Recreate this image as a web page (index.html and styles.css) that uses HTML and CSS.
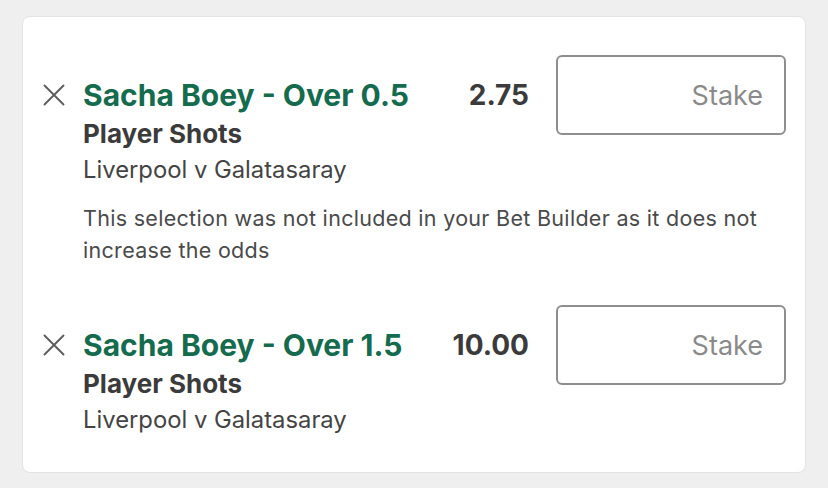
FILE: index.html
```html
<!DOCTYPE html>
<html lang="en">
<head>
<meta charset="utf-8">
<title>Bet slip</title>
<link rel="stylesheet" href="styles.css">
</head>
<body>
<div class="card">
  <div class="bet">
    <div class="bet-main">
      <svg class="close" viewBox="0 0 22 22" width="22" height="22"><path d="M1.5 1.5 L20.5 20.5 M20.5 1.5 L1.5 20.5" stroke="#5c5c5c" stroke-width="1.9" fill="none" stroke-linecap="round"/></svg>
      <div class="info">
        <div class="title">Sacha Boey - Over 0.5</div>
        <div class="market">Player Shots</div>
        <div class="event">Liverpool v Galatasaray</div>
      </div>
      <div class="odds">2.75</div>
      <div class="stake">Stake</div>
    </div>
    <p class="note">This selection was not included in your Bet Builder as it does not increase the odds</p>
  </div>
  <div class="bet">
    <div class="bet-main">
      <svg class="close" viewBox="0 0 22 22" width="22" height="22"><path d="M1.5 1.5 L20.5 20.5 M20.5 1.5 L1.5 20.5" stroke="#5c5c5c" stroke-width="1.9" fill="none" stroke-linecap="round"/></svg>
      <div class="info">
        <div class="title">Sacha Boey - Over 1.5</div>
        <div class="market">Player Shots</div>
        <div class="event">Liverpool v Galatasaray</div>
      </div>
      <div class="odds">10.00</div>
      <div class="stake">Stake</div>
    </div>
  </div>
</div>
</body>
</html>
```

FILE: styles.css
```css
html, body {
  margin: 0;
  padding: 0;
}
body {
  background: #efefef;
  font-family: Inter, "Noto Sans", "Liberation Sans", sans-serif;
  padding: 16px 22px 0 22px;
  height: 488px;
  box-sizing: border-box;
}
.card {
  background: #ffffff;
  border: 1px solid #e3e3e3;
  border-radius: 8px;
  height: 457px;
  box-sizing: border-box;
  padding: 38px 19px 0 20px;
}
.bet + .bet {
  margin-top: 39px;
}
.bet-main {
  display: flex;
  align-items: flex-start;
}
.close {
  flex: none;
  margin-top: 29px;
  margin-right: 18px;
}
.info {
  flex: 1;
  padding-top: 22px;
}
.title {
  color: #146b4d;
  font-weight: 700;
  font-size: 30px;
  line-height: 36px;
}
.market {
  color: #3b3b3b;
  font-weight: 700;
  font-size: 26px;
  line-height: 38px;
  margin-top: 2px;
}
.event {
  color: #444444;
  font-size: 23.8px;
  line-height: 34px;
}
.odds {
  color: #3b3b3b;
  font-weight: 700;
  font-size: 28px;
  line-height: 36px;
  margin-top: 22px;
  margin-right: 27px;
}
.stake {
  flex: none;
  width: 230px;
  height: 80px;
  box-sizing: border-box;
  border: 2px solid #8e8e8e;
  border-radius: 6px;
  display: flex;
  align-items: center;
  justify-content: flex-end;
  padding-right: 21px;
  color: #8a8a8a;
  font-size: 27px;
}
.note {
  margin: 15px 0 0 40px;
  color: #4a4a4a;
  font-size: 21.5px;
  letter-spacing: 0.3px;
  line-height: 32px;
  padding-right: 20px;
}
```
